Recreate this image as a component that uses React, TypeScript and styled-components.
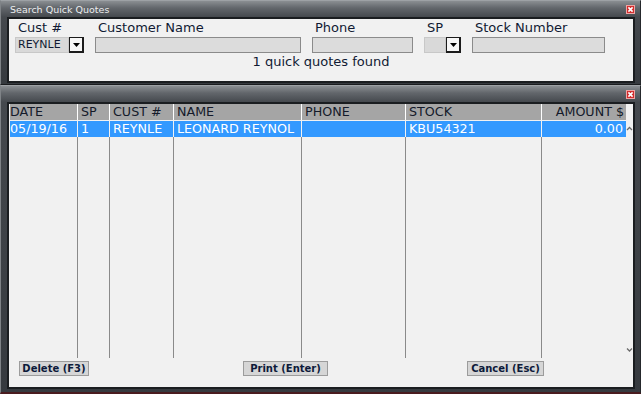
import React from "react";
import styled, { createGlobalStyle } from "styled-components";

const GlobalStyle = createGlobalStyle`
  html, body {
    margin: 0;
    padding: 0;
    background: #1e2124;
  }
  body {
    font-family: "DejaVu Sans", Verdana, sans-serif;
  }
  #root {
    width: 641px;
    height: 394px;
    display: flex;
    flex-direction: column;
  }
`;

type Column = { key: string; title: string; width: number; right?: boolean };

const columns: Column[] = [
  { key: "date", title: "DATE", width: 67 },
  { key: "sp", title: "SP", width: 32 },
  { key: "cust", title: "CUST #", width: 64 },
  { key: "name", title: "NAME", width: 128 },
  { key: "phone", title: "PHONE", width: 104 },
  { key: "stock", title: "STOCK", width: 136 },
  { key: "amount", title: "AMOUNT $", width: 85, right: true },
];

const quote: Record<string, string> = {
  date: "05/19/16",
  sp: "1",
  cust: "REYNLE",
  name: "LEONARD REYNOL",
  phone: "",
  stock: "KBU54321",
  amount: "0.00",
};

const CloseIcon = () => (
  <svg width="9" height="9" viewBox="0 0 9 9">
    <rect x="0.5" y="0.5" width="8" height="8" fill="#d12b2b" stroke="#f0a3a3" />
    <path d="M2.4 2.4l4.2 4.2M6.6 2.4l-4.2 4.2" stroke="#fff" strokeWidth="1.6" />
  </svg>
);

const DropArrow = () => (
  <svg width="7" height="4" viewBox="0 0 7 4">
    <path d="M0 0h7L3.5 4z" fill="#000" />
  </svg>
);

const Chevron = ({ down }: { down?: boolean }) => (
  <svg width="7" height="5" viewBox="0 0 7 5">
    <path
      d={down ? "M1 1.5L3.5 4L6 1.5" : "M1 4L3.5 1.5L6 4"}
      fill="none"
      stroke="#6a6a6a"
      strokeWidth="1.3"
    />
  </svg>
);

export default function App() {
  return (
    <>
      <GlobalStyle />
      <Window>
        <TitleBar>
          <span>Search Quick Quotes</span>
          <CloseIcon />
        </TitleBar>
        <Panel>
          <SearchBody>
            <FieldRow>
              <Field $w={69}>
                <Label>Cust #</Label>
                <Combo>
                  <ComboValue>REYNLE</ComboValue>
                  <ComboButton>
                    <DropArrow />
                  </ComboButton>
                </Combo>
              </Field>
              <Field $w={206}>
                <Label>Customer Name</Label>
                <TextBox />
              </Field>
              <Field $w={101}>
                <Label>Phone</Label>
                <TextBox />
              </Field>
              <Field $w={37}>
                <Label>SP</Label>
                <Combo>
                  <ComboValue />
                  <ComboButton>
                    <DropArrow />
                  </ComboButton>
                </Combo>
              </Field>
              <Field $w={133}>
                <Label>Stock Number</Label>
                <TextBox />
              </Field>
            </FieldRow>
            <Status>1 quick quotes found</Status>
          </SearchBody>
        </Panel>
      </Window>

      <Window $grow>
        <TitleBar>
          <span />
          <CloseIcon />
        </TitleBar>
        <Panel>
          <TableArea>
            <Grid $cols={columns.map((c) => c.width)}>
              {columns.map((c, i) => (
                <HeadCell key={c.key} $first={i === 0} $right={c.right}>
                  {c.title}
                </HeadCell>
              ))}
              {columns.map((c, i) => (
                <RowCell key={c.key} $first={i === 0} $right={c.right}>
                  {quote[c.key]}
                </RowCell>
              ))}
              {columns.map((c, i) => (
                <FillCell key={c.key} $first={i === 0} />
              ))}
            </Grid>
            <ScrollBar>
              <Chevron />
              <Chevron down />
            </ScrollBar>
          </TableArea>
          <Footer>
            <Button $w={70}>Delete (F3)</Button>
            <Button $w={85}>Print (Enter)</Button>
            <Button $w={77}>Cancel (Esc)</Button>
          </Footer>
        </Panel>
      </Window>
    </>
  );
}

const Window = styled.section<{ $grow?: boolean }>`
  flex: ${({ $grow }) => ($grow ? "1" : "0 0 auto")};
  min-height: 0;
  display: flex;
  flex-direction: column;
  border: 1px solid #25282c;
  border-top-color: #9da1a5;
  border-left-color: #7f8387;
  border-bottom: ${({ $grow }) => ($grow ? "2px solid #4a1c1f" : "1px solid #1a1c1f")};
  padding: 0 5px ${({ $grow }) => ($grow ? "3px" : "1px")} 6px;
  background: linear-gradient(
    to bottom,
    #8a8e92 0,
    #62666b 7px,
    #45494e 16px,
    #363a3f 100%
  );
`;

const TitleBar = styled.header`
  height: 16px;
  box-sizing: border-box;
  padding: 1px 0 0 3px;
  display: flex;
  align-items: center;
  justify-content: space-between;
  color: #eceef0;
  font-family: "DejaVu Sans", sans-serif;
  font-size: 9.5px;
  white-space: nowrap;
`;

const Panel = styled.div`
  flex: 1;
  min-height: 0;
  display: flex;
  flex-direction: column;
  background: #f1f1f1;
  border: 2px solid #1a1d20;
`;

const SearchBody = styled.div`
  height: 62px;
  box-sizing: border-box;
  padding-top: 1px;
  display: flex;
  flex-direction: column;
`;

const FieldRow = styled.div`
  display: flex;
  gap: 11px;
  padding-left: 6px;
`;

const Field = styled.div<{ $w: number }>`
  width: ${({ $w }) => $w}px;
  display: flex;
  flex-direction: column;
`;

const Label = styled.label`
  font-size: 13px;
  line-height: 15px;
  padding-left: 3px;
  margin-bottom: 2px;
  color: #101a33;
  white-space: nowrap;
`;

const TextBox = styled.div`
  height: 16px;
  box-sizing: border-box;
  border: 1px solid #8b8b8b;
  background: #dcdcdc;
`;

const Combo = styled.div`
  height: 16px;
  display: flex;
`;

const ComboValue = styled.div`
  flex: 1;
  box-sizing: border-box;
  border: 1px solid #c8c8c8;
  background: #d9d9d9;
  padding-left: 2px;
  font-size: 11px;
  line-height: 14px;
  color: #101a33;
`;

const ComboButton = styled.div`
  width: 15px;
  box-sizing: border-box;
  display: flex;
  align-items: center;
  justify-content: center;
  background: #f7f7f7;
  border: 1px solid #1c1c1c;
  border-right-width: 2px;
  border-bottom-width: 2px;
  padding-top: 1px;
`;

const Status = styled.div`
  margin-top: 1px;
  text-align: center;
  font-size: 13px;
  line-height: 15px;
  color: #101a33;
`;

const TableArea = styled.div`
  flex: 1;
  min-height: 0;
  display: flex;
  padding-left: 1px;
`;

const Grid = styled.div<{ $cols: number[] }>`
  display: grid;
  grid-template-columns: ${({ $cols }) => $cols.map((w) => `${w}px`).join(" ")};
  grid-template-rows: 16px 17px 1fr;
  font-size: 12.7px;
  line-height: 16px;
`;

const HeadCell = styled.div<{ $first?: boolean; $right?: boolean }>`
  background: #a5a5a5;
  color: #141a2a;
  border-left: ${({ $first }) => ($first ? "none" : "1px solid #ffffff")};
  padding: ${({ $first, $right }) => ($first ? "0" : $right ? "0 2px 0 0" : "0 0 0 3px")};
  text-align: ${({ $right }) => ($right ? "right" : "left")};
  white-space: nowrap;
  overflow: hidden;
`;

const RowCell = styled.div<{ $first?: boolean; $right?: boolean }>`
  background: #3399ff;
  background-clip: padding-box;
  color: #ffffff;
  border-top: 1px solid #f1f1f1;
  border-left: ${({ $first }) => ($first ? "none" : "1px solid #f1f1f1")};
  padding: ${({ $first, $right }) => ($first ? "0" : $right ? "0 3px 0 0" : "0 0 0 3px")};
  text-align: ${({ $right }) => ($right ? "right" : "left")};
  white-space: nowrap;
  overflow: hidden;
`;

const FillCell = styled.div<{ $first?: boolean }>`
  border-left: ${({ $first }) => ($first ? "none" : "1px solid #8a8a8a")};
`;

const ScrollBar = styled.div`
  flex: 1;
  display: flex;
  flex-direction: column;
  justify-content: space-between;
  align-items: center;
  padding: 22px 0 6px;
`;

const Footer = styled.div`
  height: 29px;
  box-sizing: border-box;
  padding: 3px 0 0 10px;
  display: grid;
  grid-template-columns: repeat(3, 224px);
  align-items: start;
`;

const Button = styled.button<{ $w: number }>`
  justify-self: start;
  width: ${({ $w }) => $w}px;
  height: 15px;
  margin: 0;
  padding: 0;
  box-sizing: border-box;
  border: 1px solid #9c9c9c;
  background: #d6d6d6;
  color: #0d1a3a;
  font-family: "DejaVu Sans", sans-serif;
  font-weight: bold;
  font-size: 10px;
  line-height: 13px;
  text-align: center;
  white-space: nowrap;
`;
